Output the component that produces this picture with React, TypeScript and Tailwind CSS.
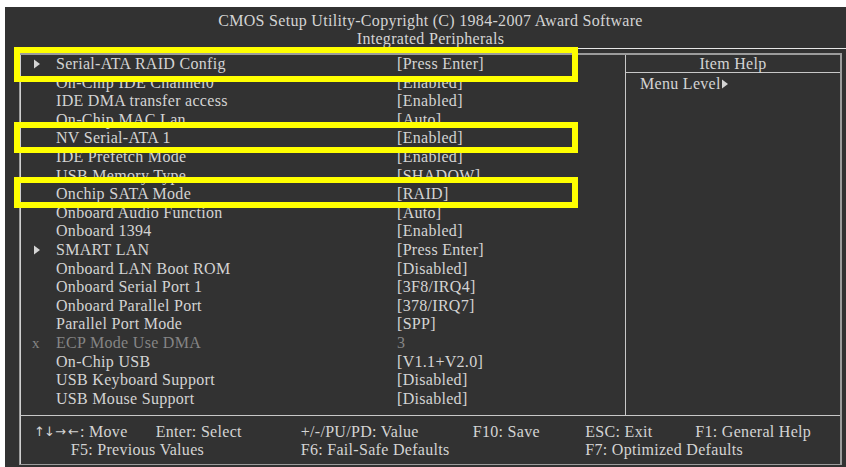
import React from "react";

type Row = { arrow?: boolean; x?: boolean; label: string; value: string; disabled?: boolean };

const rows: Row[] = [
  { arrow: true, label: "Serial-ATA RAID Config", value: "[Press Enter]" },
  { label: "On-Chip IDE Channel0", value: "[Enabled]" },
  { label: "IDE DMA transfer access", value: "[Enabled]" },
  { label: "On-Chip MAC Lan", value: "[Auto]" },
  { label: "NV Serial-ATA 1", value: "[Enabled]" },
  { label: "IDE Prefetch Mode", value: "[Enabled]" },
  { label: "USB Memory Type", value: "[SHADOW]" },
  { label: "Onchip SATA Mode", value: "[RAID]" },
  { label: "Onboard Audio Function", value: "[Auto]" },
  { label: "Onboard 1394", value: "[Enabled]" },
  { arrow: true, label: "SMART LAN", value: "[Press Enter]" },
  { label: "Onboard LAN Boot ROM", value: "[Disabled]" },
  { label: "Onboard Serial Port 1", value: "[3F8/IRQ4]" },
  { label: "Onboard Parallel Port", value: "[378/IRQ7]" },
  { label: "Parallel Port Mode", value: "[SPP]" },
  { x: true, label: "ECP Mode Use DMA", value: "3", disabled: true },
  { label: "On-Chip USB", value: "[V1.1+V2.0]" },
  { label: "USB Keyboard Support", value: "[Disabled]" },
  { label: "USB Mouse Support", value: "[Disabled]" },
];

function Tri({ className = "" }: { className?: string }) {
  return (
    <svg width="6" height="10" viewBox="0 0 6 10" className={className}>
      <polygon points="0,0.5 6,5 0,9.5" fill="currentColor" />
    </svg>
  );
}

export default function App() {
  return (
    <div className="w-[846px] h-[467px] bg-white pt-[7px] pl-[5px] overflow-hidden">
      <div
        className="relative w-[841px] h-[460px] bg-[#323232] text-[#d4d4d4] text-[16px] tracking-[0.3px]"
        style={{ fontFamily: '"Liberation Serif", "Times New Roman", serif' }}
      >
        {/* header */}
        <div className="ml-[14px] w-[823px] pt-[5px] text-center leading-[17.5px]">
          <div>CMOS Setup Utility-Copyright (C) 1984-2007 Award Software</div>
          <div>Integrated Peripherals</div>
        </div>

        {/* frame */}
        <div className="mt-[1px] ml-[14px] w-[827px] border-t border-[#e6e6e6] pt-[4px]">
          <div className="w-[823px] h-[412px] border-l-[1px] border-r-[2px] border-b-[1px] border-t-[2px] border-[#9c9c9c] flex flex-col">
            <div className="flex h-[360px] border-l border-[#d0d0d0]">
              {/* items */}
              <div className="w-[604px] leading-[18.6px]">
                {rows.map((r, i) => (
                  <div key={i} className={`grid grid-cols-[35px_341px_1fr] ${r.disabled ? "text-[#858585]" : ""}`}>
                    <div className="pl-[13px] flex items-center">
                      {r.arrow ? <Tri /> : r.x ? <span className="-ml-[2px] text-[15px]">x</span> : null}
                    </div>
                    <div className="whitespace-nowrap">{r.label}</div>
                    <div className="whitespace-nowrap">{r.value}</div>
                  </div>
                ))}
              </div>
              {/* help */}
              <div className="flex-1 border-l border-[#c8c8c8]">
                <div className="h-[18px] border-b border-[#c8c8c8] text-center leading-[18px]">Item Help</div>
                <div className="pl-[14px] pt-[2px] leading-[18px] flex items-center">
                  <span>Menu Level</span>
                  <Tri className="ml-[1px]" />
                </div>
              </div>
            </div>
            {/* footer */}
            <div className="flex-1 border-t border-[#c8c8c8] border-l border-l-[#d0d0d0] pt-[7px] leading-[18px] whitespace-nowrap">
              <div className="flex pl-[13px]">
                <span className="w-[121.7px] flex">
                  <span className="flex text-[13px] tracking-normal" style={{ fontFamily: '"DejaVu Sans", sans-serif' }}>
                    <span className="w-[10px] text-center">↑</span>
                    <span className="w-[10px] text-center">↓</span>
                    <span className="w-[13px] text-center">→</span>
                    <span className="w-[13px] text-center">←</span>
                  </span>
                  <span>: Move</span>
                </span>
                <span className="w-[145px]">Enter: Select</span>
                <span className="w-[172px]">+/-/PU/PD: Value</span>
                <span className="w-[112.6px]">F10: Save</span>
                <span className="w-[110px]">ESC: Exit</span>
                <span>F1: General Help</span>
              </div>
              <div className="flex pl-[49.7px]">
                <span className="w-[230px]">F5: Previous Values</span>
                <span className="w-[284.6px]">F6: Fail-Safe Defaults</span>
                <span>F7: Optimized Defaults</span>
              </div>
            </div>
          </div>
        </div>

        {/* yellow highlight boxes */}
        <div className="absolute left-[9px] top-[40px] w-[564px] h-[35px] border-[6px] border-[#ffff00]" />
        <div className="absolute left-[9px] top-[115px] w-[564px] h-[31px] border-[6px] border-[#ffff00]" />
        <div className="absolute left-[9px] top-[170px] w-[564px] h-[31px] border-[6px] border-[#ffff00]" />
      </div>
    </div>
  );
}
